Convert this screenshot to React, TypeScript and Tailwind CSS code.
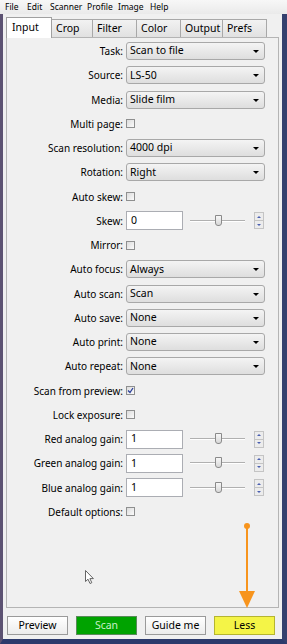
import React from "react";

const font = { fontFamily: '"Noto Sans", "Open Sans", sans-serif' };

function Combo({ value }: { value: string }) {
  return (
    <div className="flex h-[18px] w-[139px] items-center justify-between rounded-[3px] border border-[#a8a8a8] bg-gradient-to-b from-[#f4f4f4] to-[#dedede] pl-[3px] pr-[5px] text-[10.5px] text-black">
      <span>{value}</span>
      <span className="mt-[1px] h-0 w-0 border-x-[3px] border-t-[3px] border-x-transparent border-t-black" />
    </div>
  );
}

function Check({ checked }: { checked?: boolean }) {
  return (
    <div className="flex h-[9px] w-[9px] items-center justify-center border border-[#8e8f8f] bg-gradient-to-br from-[#dcdcdc] to-[#fbfbfb]">
      {checked && (
        <svg width="7" height="7" viewBox="0 0 7 7">
          <path d="M1 3.5 L3 5.5 L6 1" stroke="#2a3f9a" strokeWidth="1.3" fill="none" />
        </svg>
      )}
    </div>
  );
}

function SliderRow({ value }: { value: string }) {
  return (
    <div className="flex items-center">
      <div className="flex h-[19px] w-[57px] items-center border border-[#abadb3] bg-white pl-[4px] text-[10.5px]">
        {value}
      </div>
      <div className="relative ml-[7px] flex h-[12px] w-[55px] items-center">
        <div className="h-[2px] w-full border-y border-t-[#b0b0b0] border-b-[#ffffff] bg-[#d6d6d6]" />
        <div className="absolute left-[25px] top-[0px] h-[11px] w-[7px] rounded-b-[3px] border border-[#8a8a8a] bg-gradient-to-b from-[#f7f7f7] to-[#d8d8d8]" />
      </div>
      <div className="ml-[9px] flex h-[17px] w-[10px] flex-col border border-[#c4c4c4] bg-[#ececec]">
        <div className="flex flex-1 items-center justify-center border-b border-[#c4c4c4]">
          <span className="h-0 w-0 border-x-[2px] border-b-[2px] border-x-transparent border-b-[#4a5fb0]" />
        </div>
        <div className="flex flex-1 items-center justify-center">
          <span className="h-0 w-0 border-x-[2px] border-t-[2px] border-x-transparent border-t-[#4a5fb0]" />
        </div>
      </div>
    </div>
  );
}

type Row =
  | { label: string; kind: "combo"; value: string }
  | { label: string; kind: "check"; checked?: boolean }
  | { label: string; kind: "slider"; value: string };

const rows: Row[] = [
  { label: "Task:", kind: "combo", value: "Scan to file" },
  { label: "Source:", kind: "combo", value: "LS-50" },
  { label: "Media:", kind: "combo", value: "Slide film" },
  { label: "Multi page:", kind: "check" },
  { label: "Scan resolution:", kind: "combo", value: "4000 dpi" },
  { label: "Rotation:", kind: "combo", value: "Right" },
  { label: "Auto skew:", kind: "check" },
  { label: "Skew:", kind: "slider", value: "0" },
  { label: "Mirror:", kind: "check" },
  { label: "Auto focus:", kind: "combo", value: "Always" },
  { label: "Auto scan:", kind: "combo", value: "Scan" },
  { label: "Auto save:", kind: "combo", value: "None" },
  { label: "Auto print:", kind: "combo", value: "None" },
  { label: "Auto repeat:", kind: "combo", value: "None" },
  { label: "Scan from preview:", kind: "check", checked: true },
  { label: "Lock exposure:", kind: "check" },
  { label: "Red analog gain:", kind: "slider", value: "1" },
  { label: "Green analog gain:", kind: "slider", value: "1" },
  { label: "Blue analog gain:", kind: "slider", value: "1" },
  { label: "Default options:", kind: "check" },
];

const tabs = ["Input", "Crop", "Filter", "Color", "Output", "Prefs"];
const tabW = [46, 41, 44, 44, 42, 44];

const menu = ["File", "Edit", "Scanner", "Profile", "Image", "Help"];
const menuW = [22, 23, 37, 31, 32, 20];

export default function App() {
  return (
    <div
      className="flex h-[644px] w-[287px] flex-col overflow-hidden bg-[#f0f0f0] text-black"
      style={font}
    >
      {/* menu bar */}
      <div className="flex h-[14px] items-center bg-gradient-to-b from-[#f7f7f7] to-[#eaeaea] pl-[5px] text-[8.5px] leading-none">
        {menu.map((m, i) => (
          <span key={m} style={{ width: menuW[i] }}>
            {m}
          </span>
        ))}
      </div>

      <div className="flex flex-1 border-l-[3px] border-r-[5px] border-b-[5px] border-l-[#5c5272] border-r-[#34406e] border-b-[#2c3a6c]">
        <div className="flex flex-1 flex-col pl-[3px] pr-[3px]">
          {/* tabs */}
          <div className="mt-[3px] flex h-[20px] items-end">
            {tabs.map((t, i) => (
              <div
                key={t}
                style={{ width: tabW[i] }}
                className={
                  i === 0
                    ? "relative z-10 -mb-px flex h-[21px] items-center border border-b-0 border-[#a0a0a0] bg-white pl-[5px] text-[10.5px]"
                    : "flex h-[18px] items-center border border-l-0 border-b-0 border-[#a8a8a8] bg-gradient-to-b from-[#f2f2f2] to-[#e1e1e1] pl-[4px] text-[10.5px]"
                }
              >
                {t}
              </div>
            ))}
          </div>

          {/* panel */}
          <div className="relative flex h-[571px] flex-col border border-[#b4b4b4] bg-[#f0f0f0] pt-[1px]">
            {rows.map((r) => (
              <div key={r.label} className="flex h-[24.25px] items-center">
                <div className="w-[119px] pr-[3px] text-right text-[10px] leading-none">{r.label}</div>
                {r.kind === "combo" && <Combo value={r.value} />}
                {r.kind === "check" && <Check checked={r.checked} />}
                {r.kind === "slider" && <SliderRow value={r.value} />}
              </div>
            ))}

            {/* mouse pointer */}
            <svg className="absolute left-[78px] top-[532px]" width="10" height="15" viewBox="0 0 10 15">
              <path d="M0.5 0.5 L0.5 11.5 L3 9.2 L5 13.5 L6.8 12.7 L4.9 8.6 L8.4 8.6 Z" fill="#fff" stroke="#555" strokeWidth="0.9" />
            </svg>
          </div>

          {/* buttons */}
          <div className="mt-[8px] flex gap-[8px] pl-[1px] text-[10.5px]">
            <button className="h-[19px] w-[61px] border border-[#9a9a9a] bg-gradient-to-b from-white to-[#ececec]">Preview</button>
            <button className="h-[19px] w-[61px] border border-[#5a8a5a] bg-[#00a300] text-[#c8f0c8]">Scan</button>
            <button className="h-[19px] w-[61px] border border-[#9a9a9a] bg-gradient-to-b from-white to-[#ececec]">Guide me</button>
            <button className="h-[19px] w-[61px] border border-[#b5b530] bg-[#f4f447]">Less</button>
          </div>
        </div>
      </div>

      {/* orange arrow annotation */}
      <svg className="pointer-events-none absolute left-[236px] top-[520px]" width="22" height="92" viewBox="0 0 22 92">
        <circle cx="11" cy="6" r="3" fill="#f7941d" />
        <line x1="11" y1="6" x2="11" y2="74" stroke="#f7941d" strokeWidth="2" />
        <path d="M3 71 L19 71 L11 88 Z" fill="#f7941d" />
      </svg>
    </div>
  );
}
